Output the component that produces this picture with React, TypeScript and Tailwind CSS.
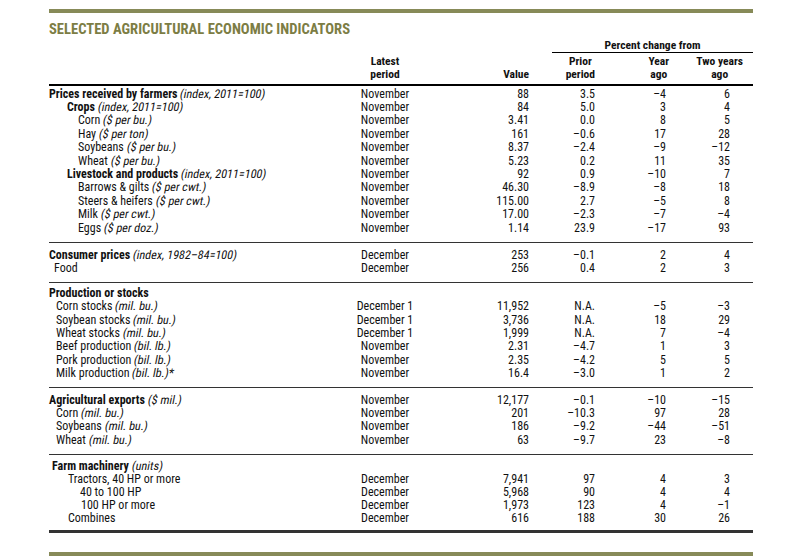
type Row = {
  pl: string;
  bold?: boolean;
  name: string;
  unit?: string;
  period?: string;
  value?: string;
  prior?: string;
  year?: string;
  two?: string;
};

type Section = { pt: string; pb: string; h: string; rows: Row[] };

const sections: Section[] = [
  {
    pt: "pt-[1px]",
    pb: "pb-[8px]",
    h: "h-[13.4px]",
    rows: [
      { pl: "pl-0", bold: true, name: "Prices received by farmers", unit: "(index, 2011=100)", period: "November", value: "88", prior: "3.5", year: "–4", two: "6" },
      { pl: "pl-[18px]", bold: true, name: "Crops", unit: "(index, 2011=100)", period: "November", value: "84", prior: "5.0", year: "3", two: "4" },
      { pl: "pl-[29px]", name: "Corn", unit: "($ per bu.)", period: "November", value: "3.41", prior: "0.0", year: "8", two: "5" },
      { pl: "pl-[29px]", name: "Hay", unit: "($ per ton)", period: "November", value: "161", prior: "–0.6", year: "17", two: "28" },
      { pl: "pl-[29px]", name: "Soybeans", unit: "($ per bu.)", period: "November", value: "8.37", prior: "–2.4", year: "–9", two: "–12" },
      { pl: "pl-[29px]", name: "Wheat", unit: "($ per bu.)", period: "November", value: "5.23", prior: "0.2", year: "11", two: "35" },
      { pl: "pl-[18px]", bold: true, name: "Livestock and products", unit: "(index, 2011=100)", period: "November", value: "92", prior: "0.9", year: "–10", two: "7" },
      { pl: "pl-[29px]", name: "Barrows & gilts", unit: "($ per cwt.)", period: "November", value: "46.30", prior: "–8.9", year: "–8", two: "18" },
      { pl: "pl-[29px]", name: "Steers & heifers", unit: "($ per cwt.)", period: "November", value: "115.00", prior: "2.7", year: "–5", two: "8" },
      { pl: "pl-[29px]", name: "Milk", unit: "($ per cwt.)", period: "November", value: "17.00", prior: "–2.3", year: "–7", two: "–4" },
      { pl: "pl-[29px]", name: "Eggs", unit: "($ per doz.)", period: "November", value: "1.14", prior: "23.9", year: "–17", two: "93" },
    ],
  },
  {
    pt: "pt-[5px]",
    pb: "pb-[7px]",
    h: "h-[13.4px]",
    rows: [
      { pl: "pl-0", bold: true, name: "Consumer prices", unit: "(index, 1982–84=100)", period: "December", value: "253", prior: "–0.1", year: "2", two: "4" },
      { pl: "pl-[5px]", name: "Food", period: "December", value: "256", prior: "0.4", year: "2", two: "3" },
    ],
  },
  {
    pt: "pt-[3px]",
    pb: "pb-[7px]",
    h: "h-[13.4px]",
    rows: [
      { pl: "pl-0", bold: true, name: "Production or stocks" },
      { pl: "pl-[7px]", name: "Corn stocks", unit: "(mil. bu.)", period: "December 1", value: "11,952", prior: "N.A.", year: "–5", two: "–3" },
      { pl: "pl-[7px]", name: "Soybean stocks", unit: "(mil. bu.)", period: "December 1", value: "3,736", prior: "N.A.", year: "18", two: "29" },
      { pl: "pl-[7px]", name: "Wheat stocks", unit: "(mil. bu.)", period: "December 1", value: "1,999", prior: "N.A.", year: "7", two: "–4" },
      { pl: "pl-[7px]", name: "Beef production", unit: "(bil. lb.)", period: "November", value: "2.31", prior: "–4.7", year: "1", two: "3" },
      { pl: "pl-[7px]", name: "Pork production", unit: "(bil. lb.)", period: "November", value: "2.35", prior: "–4.2", year: "5", two: "5" },
      { pl: "pl-[7px]", name: "Milk production", unit: "(bil. lb.)*", period: "November", value: "16.4", prior: "–3.0", year: "1", two: "2" },
    ],
  },
  {
    pt: "pt-[5px]",
    pb: "pb-[8px]",
    h: "h-[13.4px]",
    rows: [
      { pl: "pl-0", bold: true, name: "Agricultural exports", unit: "($ mil.)", period: "November", value: "12,177", prior: "–0.1", year: "–10", two: "–15" },
      { pl: "pl-[7px]", name: "Corn", unit: "(mil. bu.)", period: "November", value: "201", prior: "–10.3", year: "97", two: "28" },
      { pl: "pl-[7px]", name: "Soybeans", unit: "(mil. bu.)", period: "November", value: "186", prior: "–9.2", year: "–44", two: "–51" },
      { pl: "pl-[7px]", name: "Wheat", unit: "(mil. bu.)", period: "November", value: "63", prior: "–9.7", year: "23", two: "–8" },
    ],
  },
  {
    pt: "pt-[4px]",
    pb: "pb-[6px]",
    h: "h-[13px]",
    rows: [
      { pl: "pl-[3px]", bold: true, name: "Farm machinery", unit: "(units)" },
      { pl: "pl-[19px]", name: "Tractors, 40 HP or more", period: "December", value: "7,941", prior: "97", year: "4", two: "3" },
      { pl: "pl-[31px]", name: "40 to 100 HP", period: "December", value: "5,968", prior: "90", year: "4", two: "4" },
      { pl: "pl-[32px]", name: "100 HP or more", period: "December", value: "1,973", prior: "123", year: "4", two: "–1" },
      { pl: "pl-[19px]", name: "Combines", period: "December", value: "616", prior: "188", year: "30", two: "26" },
    ],
  },
];

const cols = "grid grid-cols-[296px_80px_104px_66px_71px_64px_23px]";

// Roboto's italic face has no condensed width, so slant the condensed upright instead
const DataRow = ({ r, h }: { r: Row; h: string }) => (
  <div className={`${cols} ${h} items-center leading-none`}>
    <div className={`${r.pl} whitespace-nowrap`}>
      <span className={r.bold ? "font-bold" : ""}>{r.name}</span>
      {r.unit && <> <span className="inline-block -skew-x-[11deg]">{r.unit}</span></>}
    </div>
    <div className="text-center whitespace-nowrap">{r.period}</div>
    <div className="text-right">{r.value}</div>
    <div className="text-right">{r.prior}</div>
    <div className="text-right">{r.year}</div>
    <div className="text-right">{r.two}</div>
    <div />
  </div>
);

export default function App() {
  return (
    <div className="w-[800px] h-[560px] bg-white text-[12px] text-[#111] pt-[9px] font-[Roboto,sans-serif] font-stretch-condensed">
      <div className="ml-[49px] w-[704px]">
        <div className="h-[4px] bg-[#878a58]" />
        <div className="mt-[9px] h-[16px] flex items-center text-[14.6px] font-bold text-[#7c7d44]">
          SELECTED AGRICULTURAL ECONOMIC INDICATORS
        </div>

        {/* header */}
        <div className="border-b-2 border-black pb-[3px] font-bold text-[11.5px] leading-[13px]">
          <div className={cols}>
            <div className="col-start-4 col-span-4 ml-[23px] h-[15px] border-b border-black text-center leading-[14px]">
              Percent change from
            </div>
          </div>
          <div className={`${cols} mt-[2px] items-end`}>
            <div />
            <div className="text-center">Latest<br />period</div>
            <div className="text-right">Value</div>
            <div className="flex justify-end"><div className="text-center">Prior<br />period</div></div>
            <div className="flex justify-end mr-[-3px]"><div className="text-center">Year<br />ago</div></div>
            <div className="flex justify-end mr-[-13px]"><div className="text-center">Two years<br />ago</div></div>
            <div />
          </div>
        </div>

        {sections.map((s, i) => (
          <div key={i} className={`${s.pt} ${s.pb} ${i > 0 ? "border-t border-[#333]" : ""}`}>
            {s.rows.map((r, j) => (
              <DataRow key={j} r={r} h={s.h} />
            ))}
          </div>
        ))}
        <div className="h-[3px] bg-[#333]" />
        <div className="mt-[19px] h-[4px] bg-[#878a58]" />
      </div>
    </div>
  );
}
